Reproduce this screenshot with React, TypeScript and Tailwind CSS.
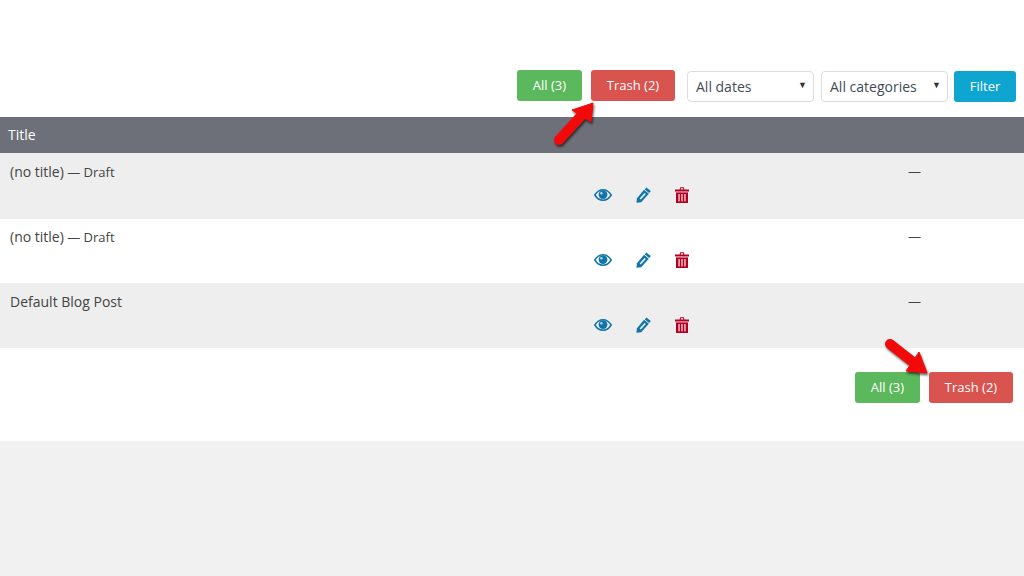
const rows = [
  { title: "(no title)", draft: true, bg: "bg-[#eeeeee]", h: "h-[66px]", pad: "pt-[9px]", lift: "" },
  { title: "(no title)", draft: true, bg: "bg-white", h: "h-[64px]", pad: "pt-[8px]", lift: "" },
  { title: "Default Blog Post", draft: false, bg: "bg-[#eeeeee]", h: "h-[65px]", pad: "pt-[9px]", lift: "mb-[2px]" },
];

function Eye() {
  return (
    <svg width="18" height="12" viewBox="0 0 18 12" className="text-[#1275a8]">
      <path d="M0.8 6 C3 2.4 5.8 0.8 9 0.8 C12.2 0.8 15 2.4 17.2 6 C15 9.6 12.2 11.2 9 11.2 C5.8 11.2 3 9.6 0.8 6 Z" fill="none" stroke="currentColor" strokeWidth="1.5" />
      <circle cx="9" cy="5.6" r="4.4" fill="currentColor" />
      <circle cx="7.4" cy="4.2" r="1.2" fill="#ffffff" fillOpacity="0.7" />
    </svg>
  );
}

function Pencil() {
  return (
    <svg width="15" height="16" viewBox="0 0 15 16" className="text-[#1275a8]">
      <path d="M10.4 0.4 L14.8 4 L13.2 6 L8.8 2.4 Z" fill="currentColor" />
      <path d="M8 2.8 L12.8 6.8 L5.2 15.2 L0.4 15.8 L1 11.2 Z" fill="currentColor" />
      <path d="M8.6 6 L9.8 7 L4.8 12.6 L3.6 11.6 Z" fill="#eaf3f8" />
    </svg>
  );
}

function Trash() {
  return (
    <svg width="14" height="16" viewBox="0 0 14 16" className="text-[#b10021]">
      <path d="M0 2.6 H4.8 V1.4 C4.8 0.6 5.3 0.2 6 0.2 H8 C8.7 0.2 9.2 0.6 9.2 1.4 V2.6 H14 V4.6 H0 Z M5.8 2.6 H8.2 V1.6 C8.2 1.3 8 1.2 7.8 1.2 H6.2 C6 1.2 5.8 1.3 5.8 1.6 Z" fill="currentColor" />
      <path d="M1 5.4 H13 V16 H1 Z" fill="currentColor" />
      <rect x="3.4" y="7" width="1.3" height="7.4" fill="#ffffff" fillOpacity="0.85" />
      <rect x="6.35" y="7" width="1.3" height="7.4" fill="#ffffff" fillOpacity="0.85" />
      <rect x="9.3" y="7" width="1.3" height="7.4" fill="#ffffff" fillOpacity="0.85" />
    </svg>
  );
}

function ArrowUp({ className }: { className: string }) {
  return (
    <svg className={className} width="50" height="50" viewBox="0 0 50 50">
      <path d="M9 40 L31 16" stroke="#f20a0a" strokeWidth="10" strokeLinecap="round" />
      <path d="M22 10 L43 3 L41 22 Z" fill="#f20a0a" stroke="#f20a0a" strokeWidth="1" strokeLinejoin="round" />
    </svg>
  );
}

function ArrowDown({ className }: { className: string }) {
  return (
    <svg className={className} width="55" height="45" viewBox="0 0 55 45">
      <path d="M10 9 L33 27" stroke="#f20a0a" strokeWidth="10" strokeLinecap="round" />
      <path d="M39 17 L47 38 L26 36 Z" fill="#f20a0a" stroke="#f20a0a" strokeWidth="1" strokeLinejoin="round" />
    </svg>
  );
}

function Buttons() {
  return (
    <div className="flex gap-[9px]">
      <button className="h-[31px] w-[65px] rounded-[3px] bg-[#5cb85c] text-[13px] text-white">All (3)</button>
      <button className="h-[31px] w-[84px] rounded-[3px] bg-[#d9534f] text-[13px] text-white">Trash (2)</button>
    </div>
  );
}

function Select({ label, width }: { label: string; width: string }) {
  return (
    <div className={`flex h-[31px] items-center justify-between rounded-[4px] border border-[#dddddd] bg-white pl-2 pr-[6px] text-[14px] text-[#444c56] ${width}`}>
      <span>{label}</span>
      <span className="mb-[3px] text-[9px] text-[#333333]">▼</span>
    </div>
  );
}

export default function App() {
  return (
    <div className="relative h-[576px] w-[1024px] overflow-hidden bg-[#f1f1f1] font-['Open_Sans',sans-serif]">
      <div className="bg-white">
        <div className="flex h-[117px] items-start justify-end pr-2 pt-[70px]">
          <Buttons />
          <div className="ml-3 mt-px flex gap-[7px]">
            <Select label="All dates" width="w-[127px]" />
            <Select label="All categories" width="w-[127px]" />
          </div>
          <button className="ml-[6px] mt-px h-[31px] w-[62px] rounded-[3px] bg-[#0ea5d0] text-[13px] text-white">Filter</button>
        </div>
        <div className="flex h-9 items-center bg-[#6d7079] pb-[2px] pl-2 text-[14px] text-white">Title</div>
        {rows.map((row, i) => (
          <div key={i} className={`${row.bg} ${row.h} ${row.pad} pl-[10px] text-[#444444]`}>
            <div className="flex h-5 items-center">
              <div className={`text-[14px] ${row.lift}`}>
                {row.title}
                {row.draft && <span className="text-[13px]"> — Draft</span>}
              </div>
              <div className="ml-auto mr-[103px] text-[13px]">—</div>
            </div>
            <div className="ml-[584px] mt-[5px] flex h-4 items-center">
              <Eye />
              <div className="ml-[24px]"><Pencil /></div>
              <div className="ml-[24px]"><Trash /></div>
            </div>
          </div>
        ))}
        <div className="flex h-[93px] justify-end pr-[11px] pt-6">
          <Buttons />
        </div>
      </div>
      <ArrowUp className="absolute left-[550px] top-[100px] drop-shadow-[1px_2px_1px_rgba(0,0,0,0.6)]" />
      <ArrowDown className="absolute left-[880px] top-[335px] drop-shadow-[1px_2px_1px_rgba(0,0,0,0.6)]" />
    </div>
  );
}
